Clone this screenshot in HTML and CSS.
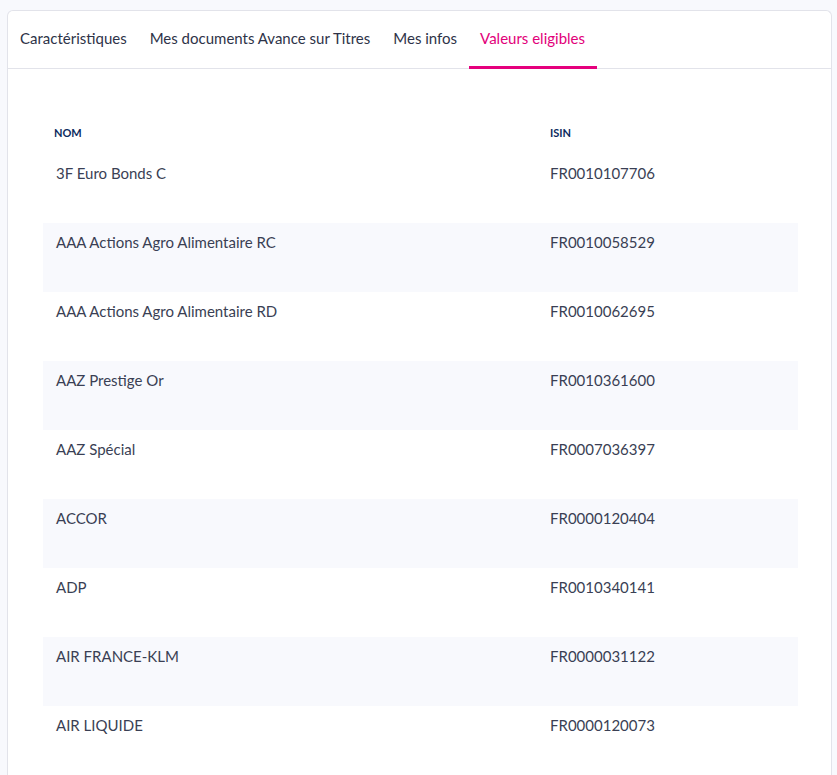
FILE: index.html
```html
<!DOCTYPE html>
<html lang="fr">
<head>
<meta charset="utf-8">
<title>Valeurs eligibles</title>
<link rel="stylesheet" href="styles.css">
</head>
<body>
<div class="card">
  <nav class="tabs">
    <a class="tab">Caractéristiques</a>
    <a class="tab">Mes documents Avance sur Titres</a>
    <a class="tab">Mes infos</a>
    <a class="tab active">Valeurs eligibles</a>
  </nav>
  <div class="content">
    <table class="grid">
      <thead>
        <tr><th class="c-name">NOM</th><th class="c-isin">ISIN</th></tr>
      </thead>
      <tbody>
        <tr><td>3F Euro Bonds C</td><td>FR0010107706</td></tr>
        <tr><td>AAA Actions Agro Alimentaire RC</td><td>FR0010058529</td></tr>
        <tr><td>AAA Actions Agro Alimentaire RD</td><td>FR0010062695</td></tr>
        <tr><td>AAZ Prestige Or</td><td>FR0010361600</td></tr>
        <tr><td>AAZ Spécial</td><td>FR0007036397</td></tr>
        <tr><td>ACCOR</td><td>FR0000120404</td></tr>
        <tr><td>ADP</td><td>FR0010340141</td></tr>
        <tr><td>AIR FRANCE-KLM</td><td>FR0000031122</td></tr>
        <tr><td>AIR LIQUIDE</td><td>FR0000120073</td></tr>
      </tbody>
    </table>
  </div>
</div>
</body>
</html>
```
FILE: styles.css
```css
html, body {
  margin: 0;
  padding: 0;
  background: #f8f9fd;
}
body {
  padding: 10px 5px 0 7px;
  font-family: Lato, "Open Sans", sans-serif;
  color: #353a50;
}
.card {
  background: #fff;
  border: 1px solid #e2e3ea;
  border-bottom: none;
  border-radius: 6px 6px 0 0;
  min-height: 780px;
}
.tabs {
  display: flex;
  height: 57px;
  border-bottom: 1px solid #e2e3ea;
}
.tab {
  display: flex;
  align-items: center;
  padding: 0 11.5px 2px;
  font-size: 15px;
  color: #2e3348;
  cursor: pointer;
  border-bottom: 3px solid transparent;
  margin-bottom: -1px;
  box-sizing: border-box;
  height: 58px;
}
.tab:first-child { padding-left: 12px; }
.tab.active {
  color: #e2007a;
  border-bottom-color: #e5007d;
}
.content {
  padding: 57px 33px 0 35px;
}
.grid {
  width: 100%;
  border-collapse: collapse;
}
.grid th {
  text-align: left;
  font-size: 11px;
  font-weight: 700;
  color: #0d2b5e;
  padding: 0 13px 14px 11px;
  height: 14px;
  line-height: 14px;
  vertical-align: top;
}
.grid th.c-name { width: 470px; }
.grid th.c-isin { padding-left: 13px; }
.grid td {
  font-size: 15px;
  height: 69px;
  box-sizing: border-box;
  padding: 10px 13px 0;
  vertical-align: top;
  color: #3a3f54;
}
.grid tbody tr:nth-child(even) td {
  background: #f8f9fd;
}
```
